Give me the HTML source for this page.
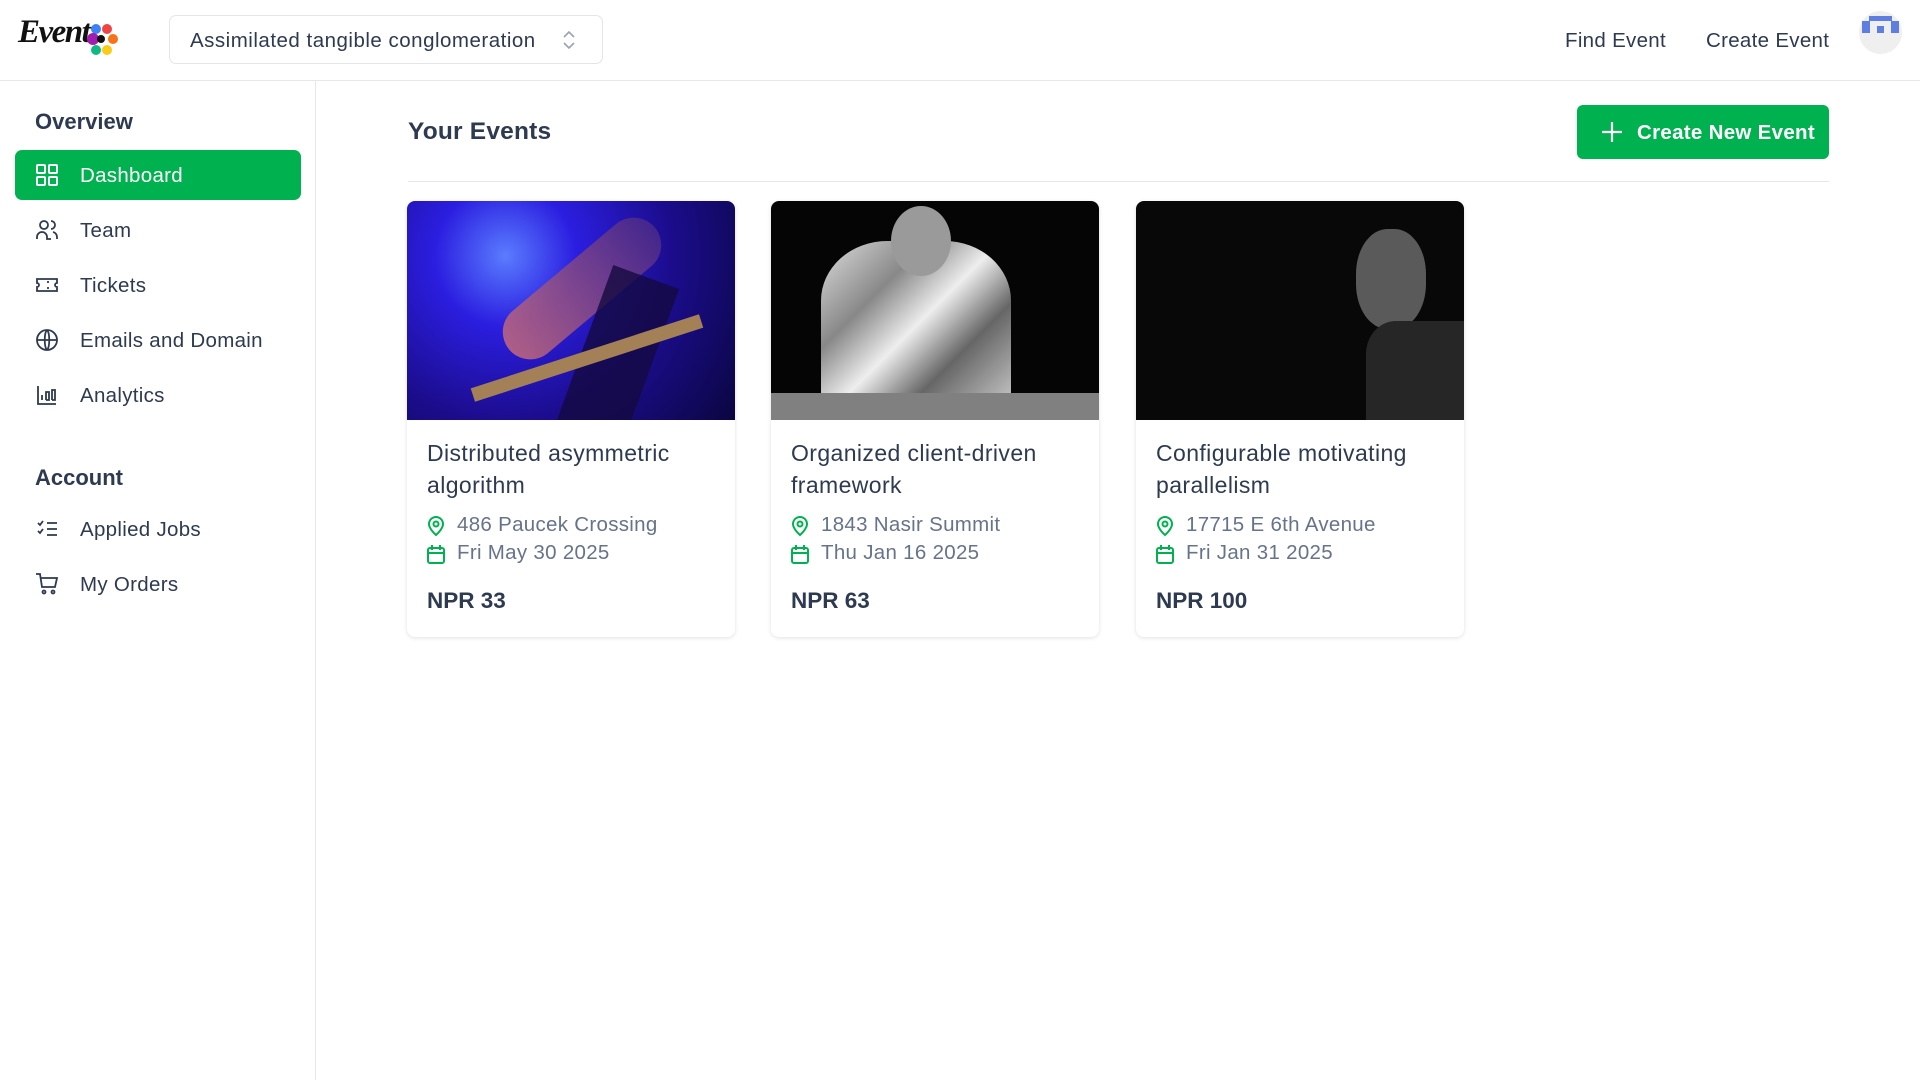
<!DOCTYPE html>
<html><head><meta charset="utf-8"><style>
*{margin:0;padding:0;box-sizing:border-box}
body{width:1920px;height:1080px;background:#fff;font-family:"Liberation Sans",sans-serif;color:#2d3a4f;position:relative;overflow:hidden}
.a{position:absolute;white-space:nowrap}
.hdr{position:absolute;left:0;top:0;width:1920px;height:81px;border-bottom:1px solid #e5e7eb}
.side{position:absolute;left:0;top:81px;width:316px;height:999px;border-right:1px solid #e5e7eb}
.nav{position:absolute;left:15px;width:286px;height:50px;border-radius:7px;font-size:20.5px;letter-spacing:.3px;line-height:52px;padding-left:65px}
.nav svg{position:absolute;left:20px;top:13px}
.card{position:absolute;top:201px;width:328px;height:436px;border-radius:8px;background:#fff;box-shadow:0 1px 4px rgba(0,0,0,.12);overflow:hidden}
.img{height:219px;position:relative;overflow:hidden}
.t{position:absolute;left:20px;top:236px;font-size:23px;letter-spacing:.4px;line-height:32px;width:300px;color:#2d3a4f}
.m{position:absolute;left:20px;font-size:20.5px;letter-spacing:.3px;color:#667389;padding-left:30px}
.m svg{position:absolute;left:0;top:3px}
.p{position:absolute;left:20px;top:387px;font-size:22.5px;font-weight:bold;color:#2d3a4f}
</style></head><body>
<div class="hdr">
 <div class="a" style="left:18px;top:14px;font-family:'Liberation Serif',serif;font-style:italic;font-weight:bold;font-size:33px;color:#111;letter-spacing:-1.5px">Event</div>
 <svg class="a" style="left:84px;top:20px" width="36" height="40"><circle cx="12" cy="9" r="5" fill="#3b82f6"/><circle cx="23" cy="9" r="5" fill="#ef4444"/><circle cx="29" cy="19" r="5" fill="#f97316"/><circle cx="23" cy="30" r="5" fill="#facc15"/><circle cx="12" cy="30" r="5" fill="#10b981"/><circle cx="9" cy="19" r="6" fill="#a21caf"/><circle cx="17" cy="19" r="4" fill="#111"/></svg>
 <div class="a" style="left:169px;top:15px;width:434px;height:49px;border:1px solid #e2e5ea;border-radius:7px"></div>
 <div class="a" style="left:190px;top:29px;font-size:20.5px;letter-spacing:.5px;color:#2d3a4f">Assimilated tangible conglomeration</div>
 <svg class="a" style="left:561px;top:29px" width="16" height="22" fill="none" stroke="#9aa3af" stroke-width="1.6"><path d="M3 8l5-5 5 5M3 14l5 5 5-5"/></svg>
 <div class="a" style="left:1565px;top:29px;font-size:20.5px;letter-spacing:.3px">Find Event</div>
 <div class="a" style="left:1706px;top:29px;font-size:20.5px;letter-spacing:.3px">Create Event</div>
 <div class="a" style="left:1859px;top:11px;width:43px;height:43px;border-radius:50%;background:#efefef"></div>
 <svg class="a" style="left:1859px;top:11px" width="43" height="43"><rect x="10" y="5" width="23" height="5" fill="#5f7fe0"/><rect x="3" y="10" width="8" height="12" fill="#5f7fe0"/><rect x="32" y="10" width="8" height="12" fill="#5f7fe0"/><rect x="18" y="15" width="7" height="7" fill="#5f7fe0"/></svg>
</div>
<div class="side">
 <div class="a" style="left:35px;top:28px;font-size:22px;font-weight:bold;color:#2d3a4f">Overview</div>
 <div class="nav" style="top:69px;background:#00b14f;color:#fff"><svg width="24" height="24" fill="none" stroke="#fff" stroke-width="2"><rect x="2" y="2" width="8" height="8" rx="1"/><rect x="14" y="2" width="8" height="8" rx="1"/><rect x="2" y="14" width="8" height="8" rx="1"/><rect x="14" y="14" width="8" height="8" rx="1"/></svg>Dashboard</div>
 <div class="nav" style="top:124px"><svg width="24" height="24" fill="none" stroke="#2d3a4f" stroke-width="1.8"><circle cx="9" cy="7" r="4"/><path d="M2 21v-2a5 5 0 0110 0v2h4M16 3a4 4 0 010 8M22 21v-2a5 5 0 00-4-5"/></svg>Team</div>
 <div class="nav" style="top:179px"><svg width="24" height="24" fill="none" stroke="#2d3a4f" stroke-width="1.8"><path d="M2 6h20v4a2 2 0 000 4v4H2v-4a2 2 0 000-4zM13 8v2M13 14v2"/></svg>Tickets</div>
 <div class="nav" style="top:234px"><svg width="24" height="24" fill="none" stroke="#2d3a4f" stroke-width="1.8"><circle cx="12" cy="12" r="10"/><path d="M2 12h20M12 2c3 3 3 17 0 20M12 2c-3 3-3 17 0 20"/></svg>Emails and Domain</div>
 <div class="nav" style="top:289px"><svg width="24" height="24" fill="none" stroke="#2d3a4f" stroke-width="1.8"><path d="M3 3v18h18M7 17v-5M11 17V9h3v8h-3M17 17V7h3v10h-3"/></svg>Analytics</div>
 <div class="a" style="left:35px;top:384px;font-size:22px;font-weight:bold">Account</div>
 <div class="nav" style="top:423px"><svg width="24" height="24" fill="none" stroke="#2d3a4f" stroke-width="1.8"><path d="M3 6l2 2 3-4M3 14l2 2 3-4M12 6h10M12 12h10M12 18h10"/></svg>Applied Jobs</div>
 <div class="nav" style="top:478px"><svg width="24" height="24" fill="none" stroke="#2d3a4f" stroke-width="1.8"><path d="M1 2h4l2 13h13l2-9H6"/><circle cx="9" cy="20" r="1.5"/><circle cx="18" cy="20" r="1.5"/></svg>My Orders</div>
</div>
<div class="a" style="left:408px;top:118px;font-size:24.5px;font-weight:bold;letter-spacing:.2px;color:#2d3a4f">Your Events</div>
<div class="a" style="left:1577px;top:105px;width:252px;height:54px;border-radius:6px;background:#00b14f"></div>
<svg class="a" style="left:1601px;top:121px" width="22" height="22" stroke="#fff" stroke-width="2.2"><path d="M11 1v20M1 11h20"/></svg>
<div class="a" style="left:1637px;top:121px;font-size:20.5px;font-weight:bold;letter-spacing:.3px;color:#fff">Create New Event</div>
<div class="a" style="left:408px;top:181px;width:1421px;height:1px;background:#e5e7eb"></div>

<div class="card" style="left:407px"><div class="img" style="background:radial-gradient(circle at 30% 25%,#5a7cff 0,#2b1ee0 25%,#1b0c8a 60%,#0a0640 100%)">
 <div class="a" style="left:80px;top:60px;width:190px;height:55px;background:linear-gradient(90deg,#c56a7a,#4a2a8a);transform:rotate(-40deg);border-radius:30px;opacity:.85"></div>
 <div class="a" style="left:170px;top:70px;width:70px;height:200px;background:#140a40;transform:rotate(20deg);opacity:.8"></div>
 <div class="a" style="left:60px;top:150px;width:240px;height:14px;background:#a48056;transform:rotate(-18deg)"></div></div>
 <div class="t">Distributed asymmetric algorithm</div>
 <div class="m" style="top:312px"><svg width="18" height="20" fill="none" stroke="#00b14f" stroke-width="2"><path d="M9 19s7-6 7-11A7 7 0 002 8c0 5 7 11 7 11z"/><circle cx="9" cy="8" r="2.5"/></svg>486 Paucek Crossing</div>
 <div class="m" style="top:340px"><svg width="18" height="20" fill="none" stroke="#00b14f" stroke-width="2"><rect x="1" y="4" width="16" height="15" rx="2"/><path d="M1 9h16M5 1v5M13 1v5"/></svg>Fri May 30 2025</div>
 <div class="p">NPR 33</div></div>

<div class="card" style="left:771px"><div class="img" style="background:#050505">
 <div class="a" style="left:50px;top:40px;width:190px;height:170px;border-radius:35% 35% 5% 5%;background:linear-gradient(135deg,#ddd,#888 30%,#eee 50%,#666 70%,#ccc)"></div>
 <div class="a" style="left:120px;top:5px;width:60px;height:70px;border-radius:50%;background:#9a9a9a"></div>
 <div class="a" style="left:0;top:192px;width:328px;height:27px;background:#808080"></div></div>
 <div class="t">Organized client-driven framework</div>
 <div class="m" style="top:312px"><svg width="18" height="20" fill="none" stroke="#00b14f" stroke-width="2"><path d="M9 19s7-6 7-11A7 7 0 002 8c0 5 7 11 7 11z"/><circle cx="9" cy="8" r="2.5"/></svg>1843 Nasir Summit</div>
 <div class="m" style="top:340px"><svg width="18" height="20" fill="none" stroke="#00b14f" stroke-width="2"><rect x="1" y="4" width="16" height="15" rx="2"/><path d="M1 9h16M5 1v5M13 1v5"/></svg>Thu Jan 16 2025</div>
 <div class="p">NPR 63</div></div>

<div class="card" style="left:1136px"><div class="img" style="background:#080808">
 <div class="a" style="left:220px;top:28px;width:70px;height:100px;border-radius:45%;background:#5a5a5a"></div>
 <div class="a" style="left:230px;top:120px;width:100px;height:110px;border-radius:30% 0 0 0;background:#262626"></div></div>
 <div class="t">Configurable motivating parallelism</div>
 <div class="m" style="top:312px"><svg width="18" height="20" fill="none" stroke="#00b14f" stroke-width="2"><path d="M9 19s7-6 7-11A7 7 0 002 8c0 5 7 11 7 11z"/><circle cx="9" cy="8" r="2.5"/></svg>17715 E 6th Avenue</div>
 <div class="m" style="top:340px"><svg width="18" height="20" fill="none" stroke="#00b14f" stroke-width="2"><rect x="1" y="4" width="16" height="15" rx="2"/><path d="M1 9h16M5 1v5M13 1v5"/></svg>Fri Jan 31 2025</div>
 <div class="p">NPR 100</div></div>
</body></html>
